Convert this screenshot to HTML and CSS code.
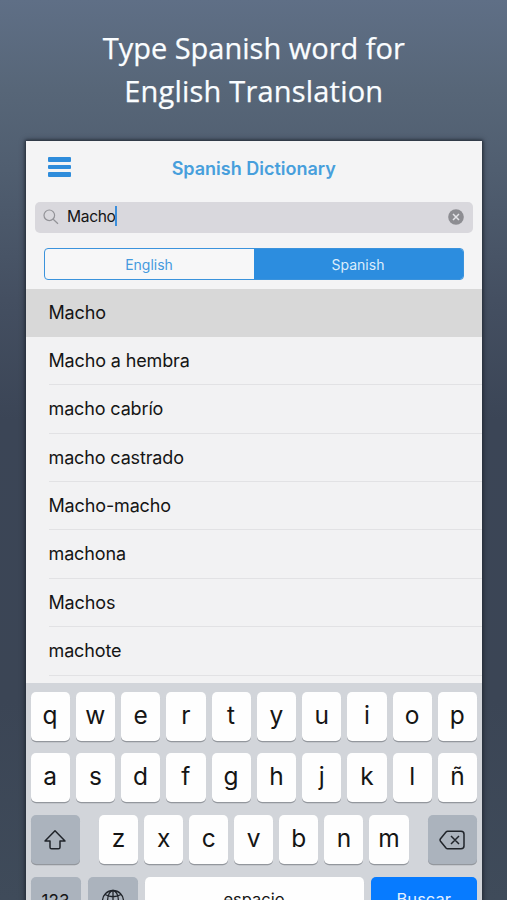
FILE: index.html
```html
<!DOCTYPE html>
<html lang="en">
<head>
<meta charset="utf-8">
<title>Spanish Dictionary</title>
<link rel="stylesheet" href="styles.css">
</head>
<body>
<main class="promo">
  <h1 class="headline"><span>Type Spanish word for</span><span class="second">English Translation</span></h1>
  <section class="phone">
    <header class="navbar">
      <div class="menu"><i></i><i></i><i></i></div>
      <h2 class="title">Spanish Dictionary</h2>
    </header>
    <div class="search">
      <svg class="glass" width="16" height="16" viewBox="0 0 16 16"><circle cx="6.3" cy="6.3" r="5.3"/><path d="M10.2 10.2L15 14.7"/></svg>
      <span class="query">Macho</span><i class="caret"></i>
      <svg class="clear" width="16" height="16" viewBox="0 0 16 16"><circle cx="8" cy="8" r="7.8"/><path d="M5 5l6 6M11 5l-6 6"/></svg>
    </div>
    <div class="segments"><span>English</span><span class="on">Spanish</span></div>
    <ul class="results">
      <li class="selected"><span>Macho</span></li>
      <li><span>Macho a hembra</span></li>
      <li><span>macho cabrío</span></li>
      <li><span>macho castrado</span></li>
      <li><span>Macho-macho</span></li>
      <li><span>machona</span></li>
      <li><span>Machos</span></li>
      <li><span>machote</span></li>
    </ul>
    <div class="keyboard">
      <div class="keys"><b>q</b><b>w</b><b>e</b><b>r</b><b>t</b><b>y</b><b>u</b><b>i</b><b>o</b><b>p</b></div>
      <div class="keys"><b>a</b><b>s</b><b>d</b><b>f</b><b>g</b><b>h</b><b>j</b><b>k</b><b>l</b><b>ñ</b></div>
      <div class="keys third">
        <b class="fn"><svg width="24" height="22" viewBox="0 0 24 22"><path d="M12 1.8L22 12H17V18.2Q17 19.8 15.4 19.8H8.6Q7 19.8 7 18.2V12H2Z"/></svg></b>
        <div class="letters"><b>z</b><b>x</b><b>c</b><b>v</b><b>b</b><b>n</b><b>m</b></div>
        <b class="fn"><svg width="26" height="20" viewBox="0 0 26 20"><path d="M8.6 1.2H22Q25 1.2 25 4.2V15.8Q25 18.8 22 18.8H8.6Q7.7 18.8 7 18L1.5 11.2Q.6 10 1.5 8.8L7 2Q7.7 1.2 8.6 1.2ZM12 6l8 8M20 6l-8 8"/></svg></b>
      </div>
      <div class="keys fourth">
        <b class="fn num">123</b>
        <b class="fn globe"><svg width="24" height="24" viewBox="0 0 24 24"><circle cx="12" cy="12" r="10.5"/><ellipse cx="12" cy="12" rx="5.4" ry="10.5"/><path d="M12 1.5v21M1.5 12h21M4 5.5Q12 10 20 5.5M4 18.5Q12 14 20 18.5"/></svg></b>
        <b class="space">espacio</b>
        <b class="go">Buscar</b>
      </div>
    </div>
  </section>
</main>
</body>
</html>
```
FILE: styles.css
```css
* { box-sizing: border-box; }
body {
  margin: 0;
  height: 900px;
  overflow: hidden;
  font-family: Inter, "Liberation Sans", sans-serif;
  color: #151515;
}
.promo {
  height: 900px;
  overflow: hidden;
  padding: 26px 25.5px 0 26px;
  background: linear-gradient(#5f6f86 0, #576678 90px, #505e70 170px, #444f61 300px, #3b4556 420px, #3b4555 700px, #3f4b5a 900px);
}
.headline {
  margin: 0;
  height: 115px;
  font: 400 29px/43px "Open Sans", sans-serif;
  -webkit-text-stroke: .25px #fafdff;
  color: #fafdff;
  text-align: center;
}
.headline span { display: block; }
.headline .second { letter-spacing: .2px; }
.phone {
  height: 800px;
  background: #f4f4f5;
  box-shadow: 0 0 3px 1px #252d39, 0 0 7px rgba(20, 26, 36, .4);
}
.navbar {
  display: grid;
  grid-template-columns: 45px 1fr 45px;
  height: 60.5px;
  padding-top: 16px;
}
.menu {
  display: flex;
  flex-direction: column;
  gap: 3px;
  margin-left: 22px;
  width: 23px;
}
.menu i { height: 4.7px; background: #2e8cdb; border-radius: 1px; }
.title {
  margin: 0;
  font-size: 18px;
  font-weight: 600;
  line-height: 24px;
  color: #479fdc;
  text-align: center;
}
.search {
  display: flex;
  align-items: center;
  height: 31px;
  margin: 0 8.5px 0 9px;
  padding: 0 9px 0 8px;
  background: #d9d8dd;
  border-radius: 5px;
}
.glass { fill: none; stroke: #929297; stroke-width: 1.2; }
.query { margin-left: 8px; font-size: 15.6px; letter-spacing: -.35px; line-height: 28px; padding-bottom: 1px; }
.caret { width: 2px; height: 20px; background: #3b8edb; margin: 0 0 2px -1px; }
.clear { margin-left: auto; fill: #8d8d92; stroke: #e4e4e8; stroke-width: 1.5; }
.clear circle { stroke: none; }
.segments {
  display: grid;
  grid-template-columns: 209px 1fr;
  height: 32px;
  margin: 15.5px 18px 8.5px 17.5px;
  border: 1px solid #3b93dc;
  border-radius: 4px;
  overflow: hidden;
  background: #f7f7f8;
  font-size: 14px;
  line-height: 31px;
  text-align: center;
  color: #459ade;
}
.segments .on { background: #2c8ddf; color: #dcedfb; }
.results {
  list-style: none;
  margin: 0;
  padding: 0;
  height: 394px;
  background: #f2f2f3;
}
.results li { height: 48.4px; padding-left: 22.5px; font-size: 18px; letter-spacing: -.14px; line-height: 48.4px; }
.results li span { display: block; height: 100%; border-bottom: 1px solid #e2e2e4; }
.results .selected { background: #d8d8d8; line-height: 48px; }
.results .selected span { border-color: transparent; }
.keyboard { height: 240px; padding: 9px 4.5px 0; background: #d2d5da; }
.keys { display: grid; grid-template-columns: repeat(10, 1fr); gap: 6px; height: 49px; margin-bottom: 12.7px; }
.keys b {
  display: flex;
  align-items: center;
  justify-content: center;
  min-width: 0;
  height: 49px;
  padding-bottom: 3px;
  border-radius: 5px;
  background: #fefefe;
  box-shadow: 0 1.2px 0 #93979d;
  font-size: 24.5px;
  font-weight: 400;
  line-height: 46px;
}
.keys svg { fill: none; stroke: #20242a; stroke-width: 1.5; stroke-linejoin: round; }
.keys .fn { background: #abb3bd; padding: 1px 0 0; }
.third { grid-template-columns: 49.5px 1fr 49.5px; gap: 19px; }
.letters { display: grid; grid-template-columns: repeat(7, 1fr); gap: 6px; }
.fourth { grid-template-columns: 50px 50px 219px 1fr; column-gap: 7px; }
.fourth b { font-size: 16.5px; font-weight: 400; padding-bottom: 4px; }
.fourth .num { font-size: 17px; padding: 0; }
.fourth .globe svg { margin-bottom: 2px; stroke-width: 1.3; }
.keys .go { background: #077bff; color: #e4f1ff; }
```
